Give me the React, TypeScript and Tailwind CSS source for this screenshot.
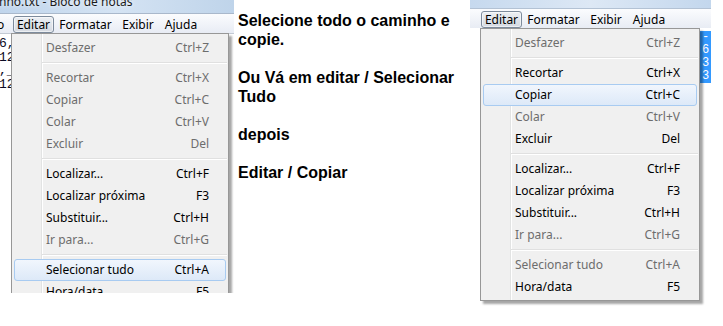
import React from "react";

type Item = { label: string; sc: string; off?: boolean; hi?: boolean } | "sep";

const leftItems: Item[] = [
  { label: "Desfazer", sc: "Ctrl+Z", off: true },
  "sep",
  { label: "Recortar", sc: "Ctrl+X", off: true },
  { label: "Copiar", sc: "Ctrl+C", off: true },
  { label: "Colar", sc: "Ctrl+V", off: true },
  { label: "Excluir", sc: "Del", off: true },
  "sep",
  { label: "Localizar...", sc: "Ctrl+F" },
  { label: "Localizar próxima", sc: "F3" },
  { label: "Substituir...", sc: "Ctrl+H" },
  { label: "Ir para...", sc: "Ctrl+G", off: true },
  "sep",
  { label: "Selecionar tudo", sc: "Ctrl+A", hi: true },
  { label: "Hora/data", sc: "F5" },
];

const rightItems: Item[] = [
  { label: "Desfazer", sc: "Ctrl+Z", off: true },
  "sep",
  { label: "Recortar", sc: "Ctrl+X" },
  { label: "Copiar", sc: "Ctrl+C", hi: true },
  { label: "Colar", sc: "Ctrl+V", off: true },
  { label: "Excluir", sc: "Del" },
  "sep",
  { label: "Localizar...", sc: "Ctrl+F" },
  { label: "Localizar próxima", sc: "F3" },
  { label: "Substituir...", sc: "Ctrl+H" },
  { label: "Ir para...", sc: "Ctrl+G", off: true },
  "sep",
  { label: "Selecionar tudo", sc: "Ctrl+A", off: true },
  { label: "Hora/data", sc: "F5" },
];

const DropMenu = ({ items, className }: { items: Item[]; className: string }) => {
  return (
    <div
      className={
        "absolute z-10 border border-[#979797] bg-[#f0f0f0] pt-[3px] pb-[2px] text-[12px] shadow-[3px_3px_2px_rgba(0,0,0,0.35)] " +
        className
      }
    >
      {/* gutter line */}
      <div className="absolute top-0 bottom-0 left-[29px] w-[2px] border-l border-[#e2e3e3] bg-white" />
      {items.map((it, i) =>
        it === "sep" ? (
          <div key={i} className="relative flex h-[8px] items-center pl-[30px] pr-[1px]">
            <div className="h-[2px] w-full border-t border-[#e0e0e0] bg-white" />
          </div>
        ) : (
          <div key={i} className="relative px-[2px]">
            <div
              className={
                "flex h-[22px] items-center rounded-[3px] border pl-[31px] pr-[16px] " +
                (it.hi
                  ? "border-[#a8cbf1] bg-gradient-to-b from-[#f1f6fd] to-[#dde9f8] "
                  : "border-transparent ") +
                (it.off ? "text-[#6d6d6d]" : "text-black")
              }
            >
              <span className="flex-1 whitespace-nowrap">{it.label}</span>
              <span className="whitespace-nowrap text-right">{it.sc}</span>
            </div>
          </div>
        )
      )}
    </div>
  );
};

const MenuBar = ({ lead }: { lead: React.ReactNode }) => {
  return (
    <div className="flex h-[19px] items-end bg-gradient-to-b from-[#fbfcfe] to-[#e8ecf4] text-[12px] text-black">
      {lead}
      <div className="flex h-[17px] w-[41px] items-center justify-center rounded-[3px] border border-[#7d8b9c] bg-gradient-to-b from-[#eceff3] to-[#d5dae2] shadow-[inset_0_0_0_1px_rgba(255,255,255,0.55)]">
        Editar
      </div>
      <div className="flex h-[17px] w-[63px] items-center justify-center">Formatar</div>
      <div className="flex h-[17px] w-[42px] items-center justify-center">Exibir</div>
      <div className="flex h-[17px] w-[44px] items-center justify-center">Ajuda</div>
    </div>
  );
};

const LeftWindow = () => {
  return (
    <div className="relative flex h-[293px] w-[234px] shrink-0 flex-col overflow-hidden">
      <div className="h-[14px] overflow-hidden border-b border-[#a9b8cb] bg-gradient-to-r from-[#c0d5ec] via-[#d4e3f3] to-[#bfd4ea]">
        <div className="-mt-[4px] -ml-[1px] whitespace-nowrap text-[12px] leading-[12px] text-[#1b1b1b] [text-shadow:0_0_4px_#ffffff]">
          nho.txt - Bloco de notas
        </div>
      </div>
      <MenuBar
        lead={
          <div className="flex h-[17px] w-[13px] items-center overflow-hidden">
            <span className="-ml-[3px]">o</span>
          </div>
        }
      />
      <div className="flex-1 border-t border-[#c3cad4] bg-white pt-[3px] font-['Liberation_Mono'] text-[13px] leading-[13.5px] text-[#0c0c24]">
        <div className="-ml-[1px]">6,</div>
        <div className="-ml-[1px]">12</div>
        <div className="-ml-[1px]">,_</div>
        <div className="-ml-[1px]">12</div>
      </div>
      <DropMenu items={leftItems} className="left-[11px] top-[33px] w-[218px]" />
    </div>
  );
};

const RightWindow = () => {
  return (
    <div className="relative flex h-[312px] w-[241px] shrink-0 flex-col">
      <div className="h-[9px] border-b border-[#b3c2d4] bg-gradient-to-r from-[#c6d9ee] via-[#dde8f5] to-[#c3d7ed]" />
      <MenuBar lead={<div className="w-[11px]" />} />
      <div className="flex-1 bg-white pt-[3px] pl-[229px]">
        <div className="w-[12px] bg-[#3399ff] pl-[3px] font-['Liberation_Mono'] text-[12px] leading-[13px] text-white">
          <div>-</div>
          <div>6</div>
          <div>3</div>
          <div>3</div>
        </div>
      </div>
      <DropMenu items={rightItems} className="left-[10px] top-[28px] w-[220px]" />
    </div>
  );
};

export default function App() {
  return (
    <div className="flex h-[326px] w-[723px] overflow-hidden bg-white font-['Noto_Sans',sans-serif]">
      <LeftWindow />
      <div className="ml-[4px] w-[228px] shrink-0 pt-[11px] font-['Liberation_Sans',Arial,sans-serif] text-[16px] leading-[19px] font-bold text-black">
        <p>Selecione todo o caminho e copie.</p>
        <p className="mt-[19px]">Ou Vá em editar / Selecionar Tudo</p>
        <p className="mt-[19px]">depois</p>
        <p className="mt-[19px]">Editar / Copiar</p>
      </div>
      <div className="ml-[4px]">
        <RightWindow />
      </div>
    </div>
  );
}
